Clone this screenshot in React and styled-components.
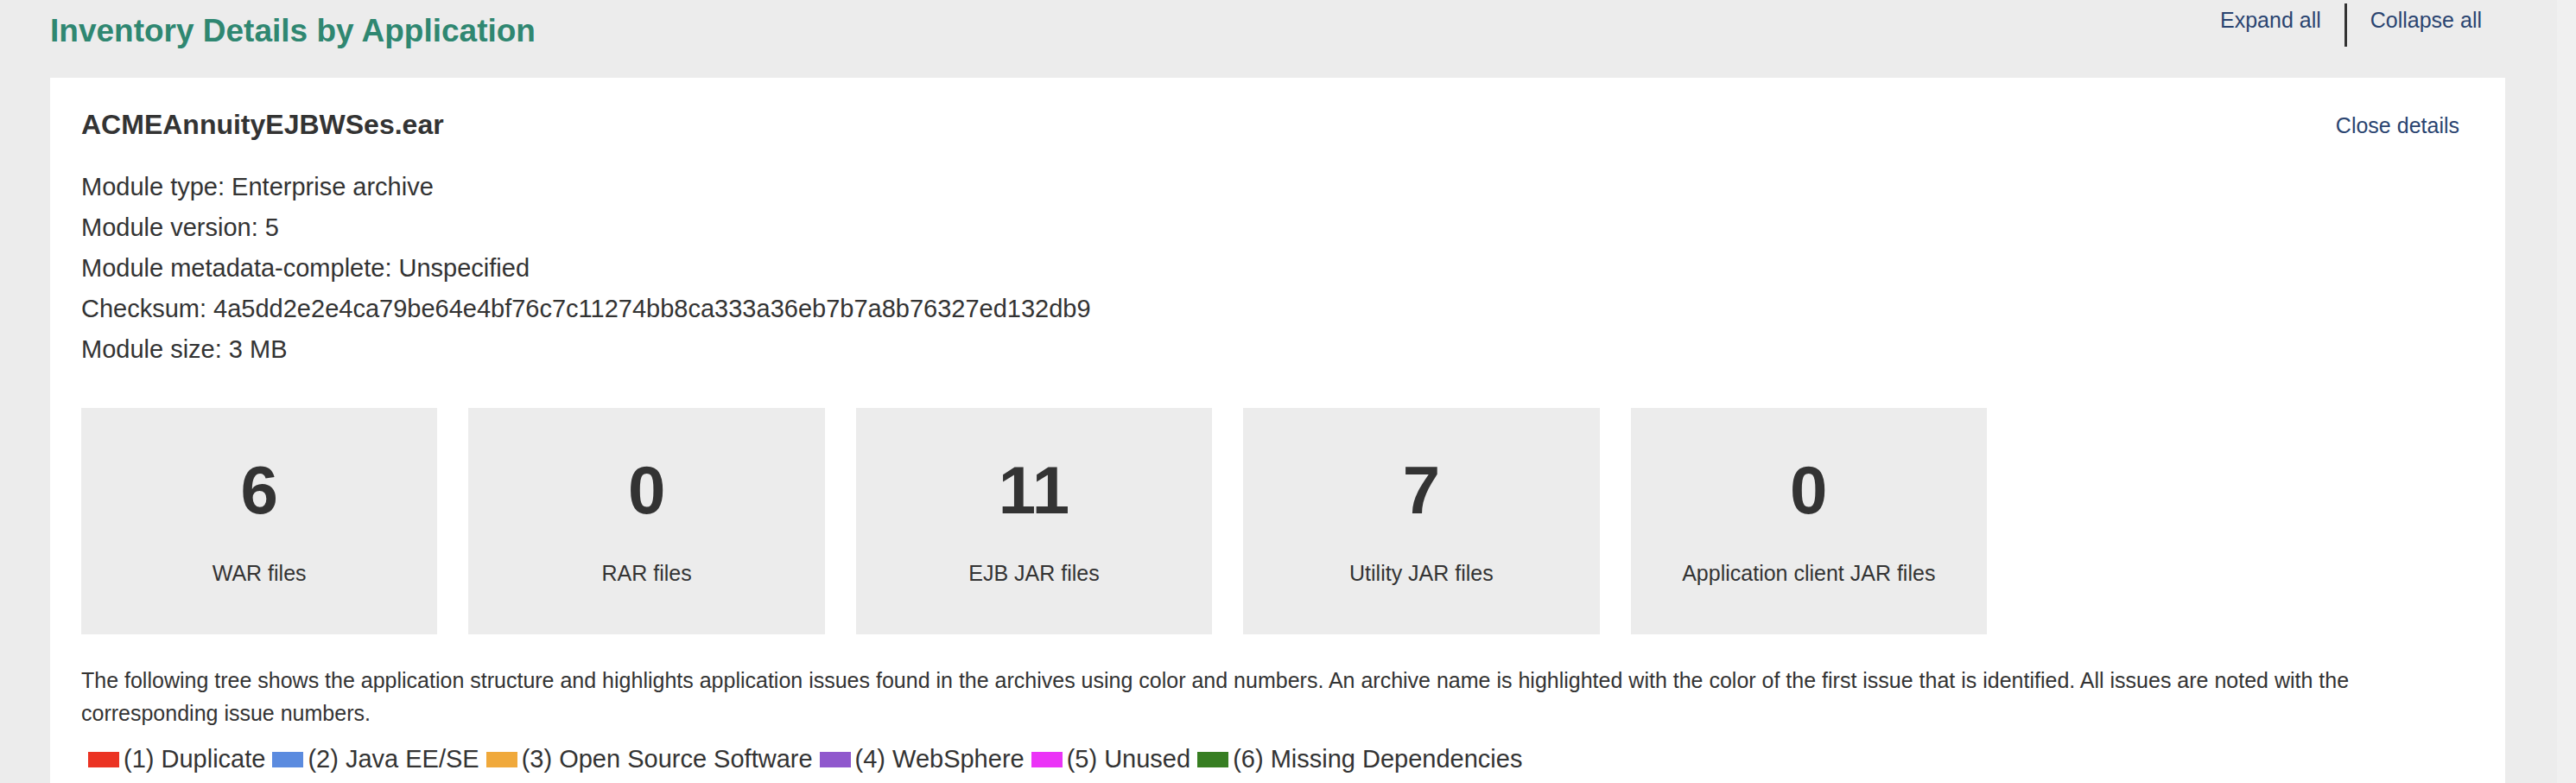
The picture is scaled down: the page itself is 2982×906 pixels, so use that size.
import React from "react";
import styled, { createGlobalStyle } from "styled-components";

const GlobalStyle = createGlobalStyle`
  * { box-sizing: border-box; }
  body {
    margin: 0;
    background: #f0f0f0;
    color: #333333;
    font-family: "Liberation Sans", Arial, sans-serif;
    font-size: 29px;
    line-height: 47px;
  }
`;

const Page = styled.main`
  display: flex;
  flex-direction: column;
  min-height: 100vh;
  margin-right: 22px;
  padding: 0 60px 0 58px;
  background: #ececec;
`;

const Header = styled.header`
  display: flex;
  justify-content: space-between;
  align-items: flex-start;
  height: 90px;
  padding-top: 4px;
`;

const Title = styled.h2`
  margin: 0;
  padding-top: 8px;
  color: #2f8771;
  font-size: 37px;
  line-height: 47px;
`;

const Actions = styled.div`
  display: flex;
  align-items: flex-start;
  padding-right: 27px;
`;

const LinkButton = styled.button`
  padding: 0;
  border: 0;
  background: none;
  color: #2a4470;
  font: inherit;
  font-size: 25px;
  line-height: 38px;
  cursor: pointer;
`;

const Divider = styled.span`
  width: 3px;
  height: 50px;
  margin: 0 27px;
  background: #333333;
`;

const Panel = styled.section`
  flex: 1;
  padding: 31px 36px 0;
  background: #ffffff;
`;

const PanelHeader = styled.div`
  display: flex;
  justify-content: space-between;
  align-items: center;
  padding-right: 17px;
`;

const PanelTitle = styled.h3`
  margin: 0;
  font-size: 32px;
  line-height: 47px;
`;

const Facts = styled.ul`
  margin: 25px 0 0;
  padding: 0;
  list-style: none;
`;

const Tiles = styled.div`
  display: grid;
  grid-template-columns: repeat(5, 1fr);
  gap: 36px;
  width: calc(80% - 10px);
  margin-top: 44px;
`;

const Tile = styled.div`
  height: 262px;
  padding-top: 49px;
  background: #ececec;
  text-align: center;
`;

const Count = styled.div`
  font-size: 78px;
  font-weight: 700;
  line-height: 92px;
`;

const TileLabel = styled.div`
  margin-top: 31px;
  font-size: 25px;
  line-height: 38px;
`;

const Description = styled.p`
  margin: 34px 0 0;
  font-size: 25px;
  line-height: 38px;
`;

const Legend = styled.ul`
  display: flex;
  flex-wrap: wrap;
  gap: 0 8px;
  margin: 11px 0 0;
  padding: 0 8px;
  list-style: none;
`;

const LegendItem = styled.li`
  display: flex;
  align-items: center;
  gap: 5px;
`;

const Swatch = styled.span`
  width: 36px;
  height: 18px;
  background: ${(p) => p.$color};
`;

const facts = [
  "Module type: Enterprise archive",
  "Module version: 5",
  "Module metadata-complete: Unspecified",
  "Checksum: 4a5dd2e2e4ca79be64e4bf76c7c11274bb8ca333a36eb7b7a8b76327ed132db9",
  "Module size: 3 MB",
];

const tiles = [
  [6, "WAR files"],
  [0, "RAR files"],
  [11, "EJB JAR files"],
  [7, "Utility JAR files"],
  [0, "Application client JAR files"],
];

const issues = [
  ["#eb3323", "(1) Duplicate"],
  ["#5b8bdf", "(2) Java EE/SE"],
  ["#f0a93b", "(3) Open Source Software"],
  ["#9058cd", "(4) WebSphere"],
  ["#eb33f7", "(5) Unused"],
  ["#377e22", "(6) Missing Dependencies"],
];

export default function App() {
  return (
    <>
      <GlobalStyle />
      <Page>
        <Header>
          <Title>Inventory Details by Application</Title>
          <Actions>
            <LinkButton type="button">Expand all</LinkButton>
            <Divider />
            <LinkButton type="button">Collapse all</LinkButton>
          </Actions>
        </Header>
        <Panel>
          <PanelHeader>
            <PanelTitle>ACMEAnnuityEJBWSes.ear</PanelTitle>
            <LinkButton type="button">Close details</LinkButton>
          </PanelHeader>
          <Facts>
            {facts.map((fact) => (
              <li key={fact}>{fact}</li>
            ))}
          </Facts>
          <Tiles>
            {tiles.map(([count, label]) => (
              <Tile key={label}>
                <Count>{count}</Count>
                <TileLabel>{label}</TileLabel>
              </Tile>
            ))}
          </Tiles>
          <Description>
            The following tree shows the application structure and highlights
            application issues found in the archives using color and numbers. An
            archive name is highlighted with the color of the first issue that
            is identified. All issues are noted with the corresponding issue
            numbers.
          </Description>
          <Legend>
            {issues.map(([color, label]) => (
              <LegendItem key={label}>
                <Swatch $color={color} />
                {label}
              </LegendItem>
            ))}
          </Legend>
        </Panel>
      </Page>
    </>
  );
}
